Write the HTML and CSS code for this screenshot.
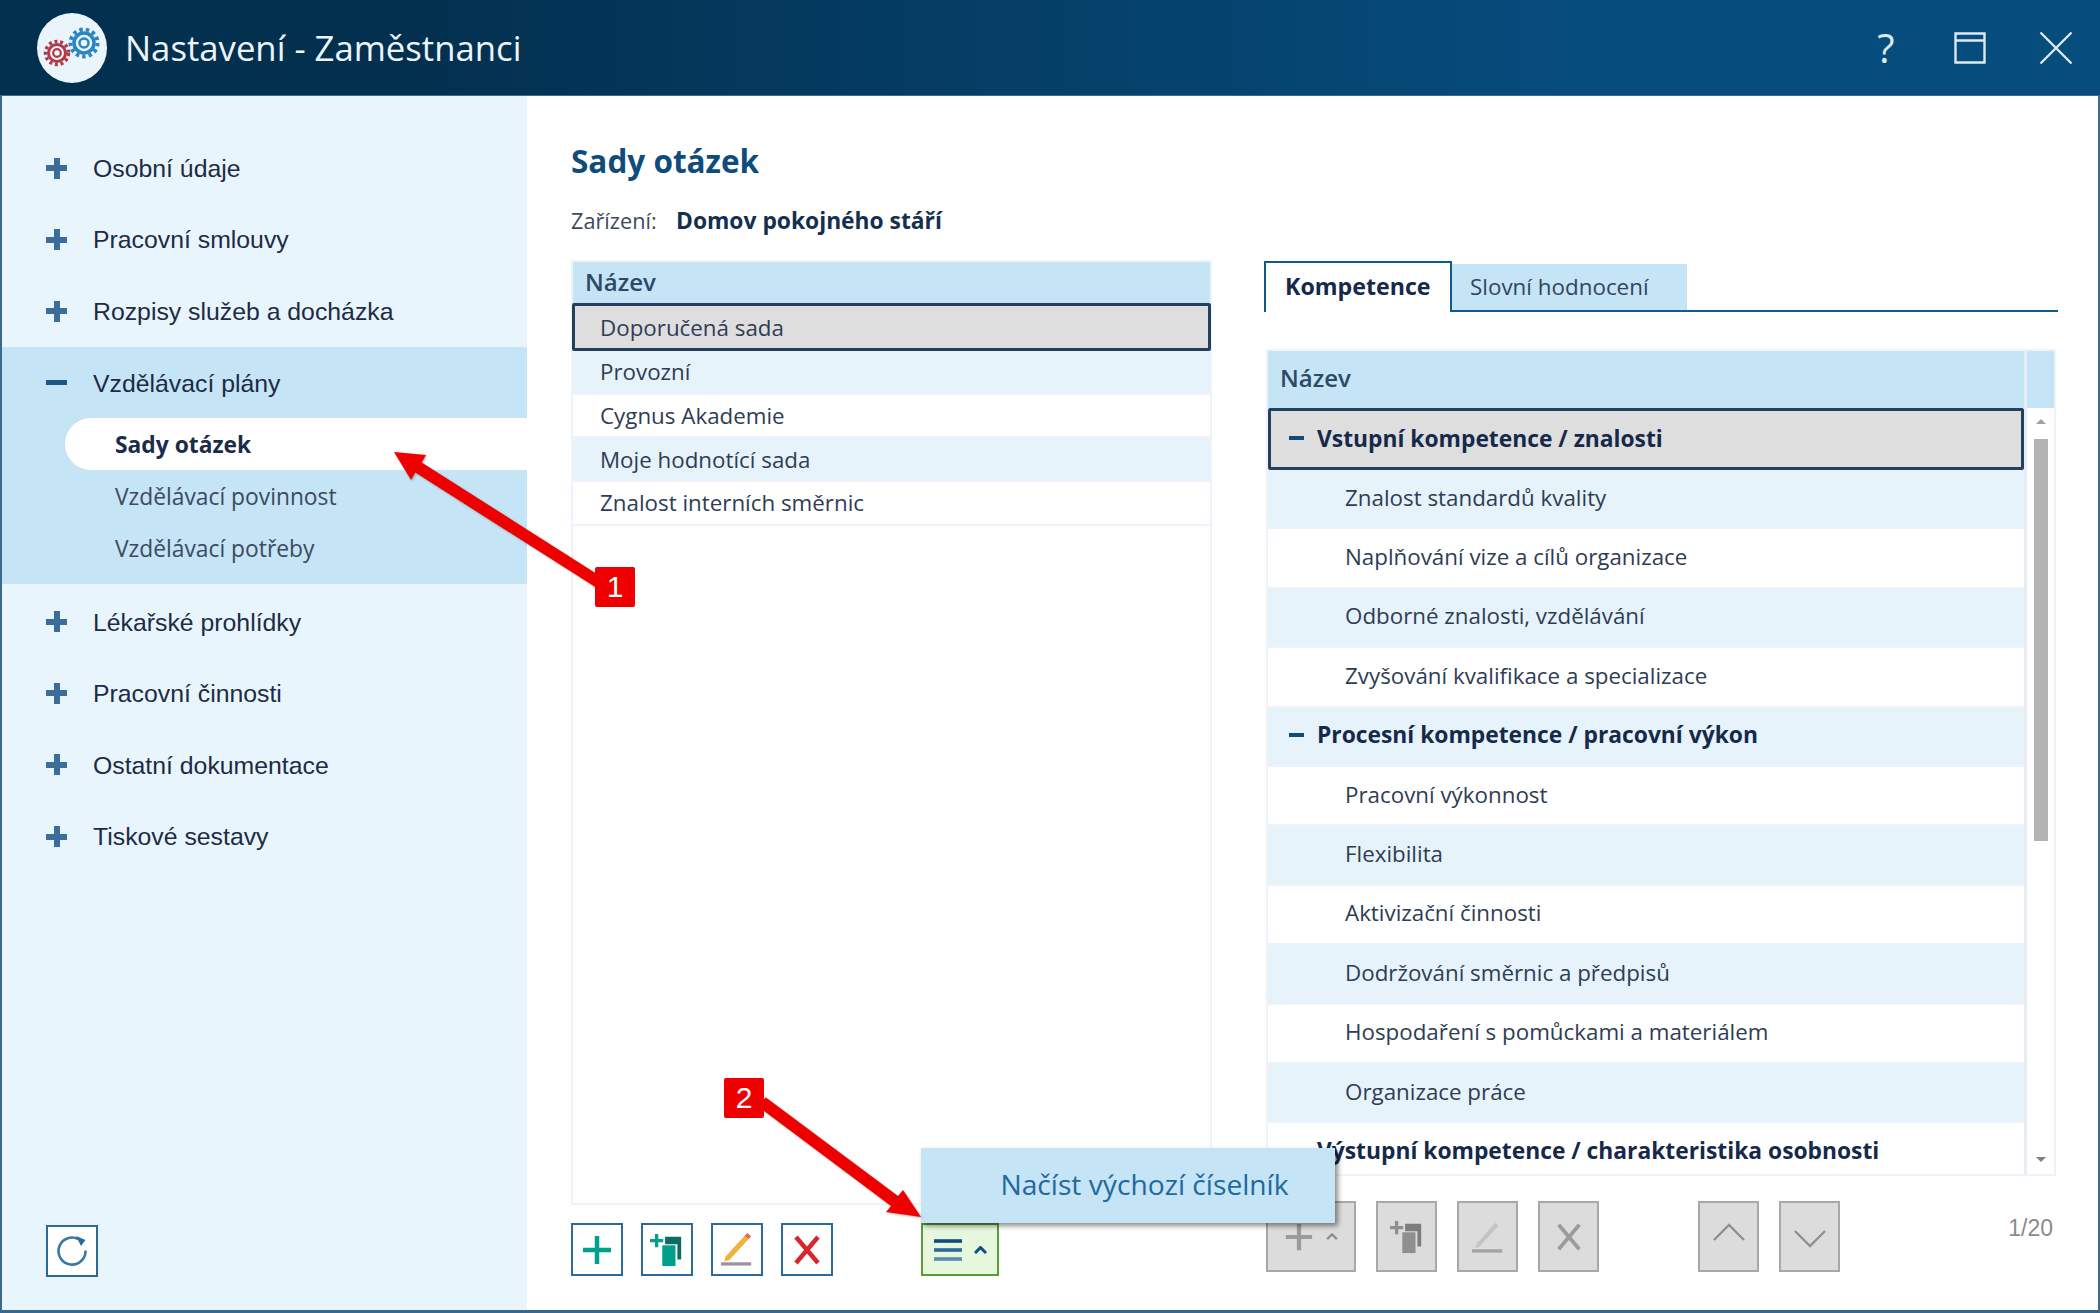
FILE: index.html
```html
<!DOCTYPE html>
<html lang="cs">
<head>
<meta charset="utf-8">
<title>Nastavení - Zaměstnanci</title>
<link rel="stylesheet" href="styles.css">
</head>
<body>
<div class="window">
  <header class="titlebar">
    <div class="logo">
      <svg viewBox="0 0 70 70" width="70" height="70">
        <g fill="none" stroke="#2a85c4">
          <circle cx="47" cy="30" r="13.500" stroke-width="4" stroke-dasharray="3.400 3.100"/>
          <circle cx="47" cy="30" r="10" stroke-width="3.500"/>
          <circle cx="47" cy="30" r="4.500" stroke-width="2.500"/>
        </g>
        <g fill="none" stroke="#b23a48">
          <circle cx="20" cy="40" r="11.500" stroke-width="3.500" stroke-dasharray="3 2.700"/>
          <circle cx="20" cy="40" r="8.500" stroke-width="3"/>
          <circle cx="20" cy="40" r="3.800" stroke-width="2.200"/>
        </g>
      </svg>
    </div>
    <h1 class="title">Nastavení - Zaměstnanci</h1>
    <div class="winctl">
      <span class="help">?</span>
      <svg class="ctl" viewBox="0 0 32 32" width="32" height="32"><path d="M1.500 1.500h29v29h-29zM1.500 8.500h29" fill="none" stroke="#dfe9f1" stroke-width="2.400"/></svg>
      <svg class="ctl" viewBox="0 0 34 34" width="34" height="34"><path d="M1.500 1.500l31 31M32.500 1.500l-31 31" fill="none" stroke="#dfe9f1" stroke-width="2.400"/></svg>
    </div>
  </header>
  <div class="content">
    <nav class="sidebar">
      <div class="nav">
        <div class="nav-item"><span class="sign plus"></span>Osobní údaje</div>
        <div class="nav-item"><span class="sign plus"></span>Pracovní smlouvy</div>
        <div class="nav-item"><span class="sign plus"></span>Rozpisy služeb a docházka</div>
        <div class="nav-group">
          <div class="nav-item"><span class="sign minus"></span>Vzdělávací plány</div>
          <div class="sub sub-active">Sady otázek</div>
          <div class="sub">Vzdělávací povinnost</div>
          <div class="sub">Vzdělávací potřeby</div>
        </div>
        <div class="nav-item"><span class="sign plus"></span>Lékařské prohlídky</div>
        <div class="nav-item"><span class="sign plus"></span>Pracovní činnosti</div>
        <div class="nav-item"><span class="sign plus"></span>Ostatní dokumentace</div>
        <div class="nav-item"><span class="sign plus"></span>Tiskové sestavy</div>
      </div>
      <button class="btn refresh">
        <svg viewBox="0 0 32 32" width="32" height="32"><path d="M29.500 15.500A13.500 13.500 0 1 1 22 4" fill="none" stroke="#3a78a8" stroke-width="2.600"/><path d="M20 1L29.500 5L25 11z" fill="#2a6a9c"/></svg>
      </button>
    </nav>
    <main class="main">
      <h2 class="heading">Sady otázek</h2>
      <div class="facility"><span class="fac-label">Zařízení:</span><strong class="fac-value">Domov pokojného stáří</strong></div>
      <div class="columns">
        <section class="left">
          <div class="listbox">
            <div class="thead">Název</div>
            <div class="lrow selected">Doporučená sada</div>
            <div class="lrow tint">Provozní</div>
            <div class="lrow">Cygnus Akademie</div>
            <div class="lrow tint">Moje hodnotící sada</div>
            <div class="lrow">Znalost interních směrnic</div>
          </div>
          <div class="toolbar">
            <button class="btn tool">
              <svg viewBox="0 0 32 32" width="32" height="32"><path d="M16 2v28M2 16h28" stroke="#00a08a" stroke-width="4.500" fill="none"/></svg>
            </button>
            <button class="btn tool">
              <svg viewBox="0 0 36 36" width="34" height="34"><path d="M16 4h17v24h-4V12H16z" fill="#0d6b60"/><rect x="13" y="13" width="14" height="22" fill="#00a08a"/><path d="M7 1v14M0 8h14" stroke="#00a08a" stroke-width="3.500" fill="none"/></svg>
            </button>
            <button class="btn tool">
              <svg viewBox="0 0 36 36" width="34" height="34"><path d="M6 25L26 3l4 3.500L10 28.500l-5.500 1.500z" fill="#f0b23c"/><path d="M26 3l3-3 4 3.500-3 3z" fill="#e86a4a"/><rect x="1" y="31" width="32" height="3.500" fill="#9a93a3"/></svg>
            </button>
            <button class="btn tool">
              <svg viewBox="0 0 32 32" width="32" height="32"><path d="M5 3l22 26M27 3L5 29" stroke="#d8262e" stroke-width="4.500" fill="none"/></svg>
            </button>
            <div class="menu-wrap">
              <div class="popup">Načíst výchozí číselník</div>
              <button class="btn menu-btn">
                <svg viewBox="0 0 28 22" width="28" height="22"><path d="M0 2h28" stroke="#0f4f80" stroke-width="3.600"/><path d="M0 11h28" stroke="#2a6a9c" stroke-width="3.600"/><path d="M0 20h28" stroke="#5a8cb4" stroke-width="3.600"/></svg>
                <svg class="caret" viewBox="0 0 13 8" width="13" height="8"><path d="M1 7l5.500-5.500L12 7" stroke="#0f4f80" stroke-width="3" fill="none"/></svg>
              </button>
            </div>
          </div>
        </section>
        <section class="right">
          <div class="tabs">
            <div class="tab tab-active">Kompetence</div>
            <div class="tab">Slovní hodnocení</div>
          </div>
          <div class="grid">
            <div class="grid-main">
              <div class="thead thead-lg">Název</div>
              <div class="grow selected parent"><span class="dash"></span>Vstupní kompetence / znalosti</div>
              <div class="grow tint child">Znalost standardů kvality</div>
              <div class="grow child">Naplňování vize a cílů organizace</div>
              <div class="grow tint child">Odborné znalosti, vzdělávání</div>
              <div class="grow child">Zvyšování kvalifikace a specializace</div>
              <div class="grow tint parent"><span class="dash"></span>Procesní kompetence / pracovní výkon</div>
              <div class="grow child">Pracovní výkonnost</div>
              <div class="grow tint child">Flexibilita</div>
              <div class="grow child">Aktivizační činnosti</div>
              <div class="grow tint child">Dodržování směrnic a předpisů</div>
              <div class="grow child">Hospodaření s pomůckami a materiálem</div>
              <div class="grow tint child">Organizace práce</div>
              <div class="grow parent"><span class="dash"></span>Výstupní kompetence / charakteristika osobnosti</div>
            </div>
            <div class="scroll">
              <div class="scroll-head"></div>
              <div class="scroll-track">
                <span class="arr arr-up"></span>
                <div class="thumb"></div>
                <span class="arr arr-down"></span>
              </div>
            </div>
          </div>
          <div class="toolbar-r">
            <button class="gbtn gbtn-wide">
              <svg viewBox="0 0 32 32" width="30" height="30"><path d="M16 2v28M2 16h28" stroke="#9b9b9b" stroke-width="4.500" fill="none"/></svg>
              <svg viewBox="0 0 13 8" width="12" height="7"><path d="M1 7l5.500-5.500L12 7" stroke="#8a8a8a" stroke-width="2.500" fill="none"/></svg>
            </button>
            <button class="gbtn">
              <svg viewBox="0 0 36 36" width="34" height="34"><path d="M16 4h17v24h-4V12H16z" fill="#7d7d7d"/><rect x="13" y="13" width="14" height="22" fill="#8f8f8f"/><path d="M7 1v14M0 8h14" stroke="#8f8f8f" stroke-width="3.500" fill="none"/></svg>
            </button>
            <button class="gbtn">
              <svg viewBox="0 0 36 36" width="34" height="34"><path d="M6 25L26 3l3 3L9 28l-4.500 2z" fill="#c4c4c4"/><rect x="1" y="31" width="32" height="3.500" fill="#a3a3a3"/></svg>
            </button>
            <button class="gbtn">
              <svg viewBox="0 0 32 32" width="30" height="30"><path d="M5 3l22 26M27 3L5 29" stroke="#9b9b9b" stroke-width="4" fill="none"/></svg>
            </button>
            <button class="gbtn gbtn-gap">
              <svg class="chev-up" viewBox="0 0 34 19" width="32" height="18"><path d="M1 18L17 2l16 16" stroke="#8f8f8f" stroke-width="2.400" fill="none"/></svg>
            </button>
            <button class="gbtn">
              <svg class="chev-down" viewBox="0 0 34 19" width="32" height="18"><path d="M1 1l16 16L33 1" stroke="#8f8f8f" stroke-width="2.400" fill="none"/></svg>
            </button>
            <span class="pager">1/20</span>
          </div>
        </section>
      </div>
    </main>
  </div>
  <svg class="arrows" viewBox="0 0 2100 1313" width="2100" height="1313">
    <path class="arrow" d="M394 452L426 455L421.700 462.400L603.200 578L596.800 588L415.300 472.600L411 480Z"/>
    <path class="arrow" d="M921 1217L886 1212L891 1206L758.400 1106.800L765.600 1097.200L898 1196L903 1190Z"/>
  </svg>
  <div class="badge badge-one">1</div>
  <div class="badge badge-two">2</div>
</div>
</body>
</html>
```
FILE: styles.css
```css
* { box-sizing: border-box; }
html, body { margin: 0; padding: 0; background: #fff; }
body { width: 2100px; height: 1313px; overflow: hidden; font-family: "Open Sans", sans-serif; color: #2c3a50; }

.window {
  position: relative;
  width: 2100px;
  height: 1313px;
  display: flex;
  flex-direction: column;
  border-left: 2px solid #3a6a90;
  border-right: 2px solid #3a6a90;
  border-bottom: 3px solid #34688f;
}

.titlebar {
  height: 96px;
  flex: none;
  margin: 0 -2px;
  padding: 0 27px 0 37px;
  display: flex;
  align-items: center;
  background: linear-gradient(90deg, #03304f 0%, #03304f 20%, #064c7d 75%, #064c7d 100%);
  border-bottom: 1px solid #3a6a90;
}
.logo { width: 70px; height: 70px; border-radius: 50%; background: #eaf5fb; flex: none; }
.logo svg { display: block; }
.title { margin: 0 0 0 18px; font-size: 34.700px; font-weight: 400; color: #eef5fa; }
.winctl { margin-left: auto; display: flex; align-items: center; }
.help { width: 32px; font-size: 40px; line-height: 44px; color: #dfe9f1; text-align: center; margin-right: 52px; }
.ctl { display: block; }
.ctl + .ctl { margin-left: 53px; }

.content { flex: 1; display: flex; min-height: 0; }

.sidebar {
  width: 525px;
  flex: none;
  background: #e9f5fc;
  display: flex;
  flex-direction: column;
  padding-top: 36px;
}
.nav { flex: 1; }
.nav-item {
  height: 71.600px;
  display: flex;
  align-items: center;
  padding: 2px 0 0 91px;
  position: relative;
  font-family: "Liberation Sans", sans-serif;
  font-size: 24.800px;
  color: #1d2b45;
}
.sign { position: absolute; left: 44px; top: 33px; width: 21px; height: 6px; background: #3c6d9a; }
.plus::after { content: ""; position: absolute; left: 7.500px; top: -7.500px; width: 6px; height: 21px; background: #3c6d9a; }
.minus { background: #1f5685; height: 5px; }

.nav-group { background: #c5e4f5; height: 237px; margin-bottom: 2px; }
.sub {
  height: 52px;
  display: flex;
  align-items: center;
  margin-left: 63px;
  padding: 1px 0 0 50px;
  font-size: 22.800px;
  color: #3c4a60;
}
.sub-active {
  background: #fff;
  border-radius: 26px 0 0 26px;
  font-weight: 700;
  color: #1c2c48;
}

.btn {
  padding: 0;
  background: #fff;
  border: 2px solid #2b6a9a;
  display: flex;
  align-items: center;
  justify-content: center;
  cursor: pointer;
}
.refresh { width: 52px; height: 52px; margin: 0 0 33px 44px; flex: none; }

.main { flex: 1; min-width: 0; padding: 44px 40px 0 44px; display: flex; flex-direction: column; }
.heading { margin: 0; font-size: 31.500px; line-height: 42px; font-weight: 700; color: #0f4c7c; }
.facility { margin-top: 22px; height: 32px; display: flex; align-items: center; }
.fac-label { color: #3d4a5c; width: 105px; font-size: 21.700px; }
.fac-value { color: #15304f; font-weight: 700; font-size: 22.800px; }

.columns { display: flex; margin-top: 26px; flex: 1; min-height: 0; }
.left { width: 641px; flex: none; display: flex; flex-direction: column; }
.right { width: 794px; margin-left: 52px; flex: none; display: flex; flex-direction: column; }

.listbox { height: 945px; margin-top: -2px; border: 2px solid #eef3fb; }
.thead {
  height: 41px;
  padding: 0 0 3px 12px;
  background: #c5e4f5;
  display: flex;
  align-items: center;
  font-size: 24px;
  font-weight: 600;
  color: #2c4966;
}
.lrow {
  height: 43.700px;
  display: flex;
  align-items: center;
  padding-left: 27px;
  font-size: 22.350px;
  color: #2e3c54;
  border-bottom: 2px solid #eef3fb;
}
.tint { background: #e6f3fb; }
.selected {
  background: #dedede;
  border: 3px solid #23415f;
  border-radius: 2px;
  margin: 0 -1px;
}
.lrow.selected { height: 48px; padding-left: 25px; }

.toolbar { margin-top: 18px; display: flex; gap: 18px; height: 53px; }
.tool { width: 52px; height: 53px; }
.menu-wrap { position: relative; margin-left: 70px; }
.menu-btn { width: 78px; height: 53px; background: #e5f7dc; border-color: #5d9a35; gap: 12px; }
.popup {
  position: absolute;
  left: 0;
  bottom: 53px;
  width: 414px;
  height: 75px;
  padding: 0 0 3px 33px;
  background: #c5e4f5;
  box-shadow: 3px 3px 5px rgba(0,0,0,.45);
  display: flex;
  align-items: center;
  justify-content: center;
  font-size: 28.200px;
  color: #1e6a9e;
  z-index: 2;
  white-space: nowrap;
}

.tabs { height: 50px; display: flex; align-items: flex-end; border-bottom: 2px solid #0f5c8c; flex: none; }
.tab {
  height: 46px;
  width: 235px;
  background: #c5e4f5;
  font-size: 22.400px;
  color: #33455e;
  padding: 0 0 2px 18px;
  display: flex;
  align-items: center;
}
.tab-active {
  width: 188px;
  height: 51px;
  margin-bottom: -2px;
  padding: 0 0 3px 19px;
  background: #fff;
  border: 2px solid #0f5c8c;
  border-bottom: 0;
  font-size: 23.200px;
  font-weight: 700;
  color: #16294a;
}

.grid { margin-top: 37px; margin-left: 2px; width: 790px; height: 827px; border: 2px solid #eef3fb; display: flex; flex: none; overflow: hidden; }
.grid-main { width: 756px; flex: none; overflow: hidden; }
.thead-lg { height: 57px; padding: 0 0 4px 12px; }
.grow {
  height: 59.400px;
  padding-bottom: 3px;
  display: flex;
  align-items: center;
  font-size: 22.350px;
  border-bottom: 2px solid #eef3fb;
  color: #2e3c54;
  position: relative;
}
.grow.selected { height: 62px; margin: 0; border-bottom: 3px solid #23415f; padding-bottom: 2px; padding-left: 46px; }
.child { padding-left: 77px; }
.parent { padding-left: 49px; font-size: 22.800px; font-weight: 700; color: #16294a; }
.dash { position: absolute; left: 21px; top: 50%; width: 15px; height: 4px; margin-top: -3px; background: #0f4c7c; }
.grow.selected .dash { left: 18px; }
.scroll { flex: 1; border-left: 3px solid #e8edf5; display: flex; flex-direction: column; }
.scroll-head { height: 57px; background: #c5e4f5; flex: none; }
.scroll-track { flex: 1; display: flex; flex-direction: column; align-items: center; padding: 11px 0 12px; }
.arr { width: 0; height: 0; border-left: 5px solid transparent; border-right: 5px solid transparent; flex: none; }
.arr-up { border-bottom: 5px solid #a0a0a0; }
.arr-down { margin-top: auto; border-top: 5px solid #808080; }
.thumb { width: 14px; height: 402px; margin-top: 15px; background: #b3b3b3; flex: none; }

.toolbar-r { margin-top: 25px; margin-left: 2px; display: flex; height: 71px; align-items: flex-start; gap: 20px; position: relative; }
.gbtn {
  width: 61px;
  height: 71px;
  padding: 0;
  background: #dcdcdc;
  border: 2px solid #a8a8a8;
  display: flex;
  align-items: center;
  justify-content: center;
}
.gbtn-wide { width: 90px; gap: 12px; }
.gbtn-gap { margin-left: 79px; }
.chev-up { margin-bottom: 9px; }
.chev-down { margin-top: 5px; }
.pager { position: absolute; right: 5px; top: 14px; font-family: "Liberation Sans", sans-serif; font-size: 23px; color: #8a8a8a; }

.arrows { position: absolute; left: -2px; top: 0; z-index: 3; pointer-events: none; }
.arrow { fill: #ee0000; filter: drop-shadow(1px 1px 1px rgba(0,0,0,.3)); }
.badge {
  position: absolute;
  width: 40px;
  height: 40px;
  background: #ee0000;
  border-radius: 2px;
  color: #fff;
  font-family: "Liberation Sans", sans-serif;
  font-size: 30px;
  display: flex;
  align-items: center;
  justify-content: center;
  z-index: 4;
}
.badge-one { left: 593px; top: 567px; }
.badge-two { left: 722px; top: 1078px; }
```
